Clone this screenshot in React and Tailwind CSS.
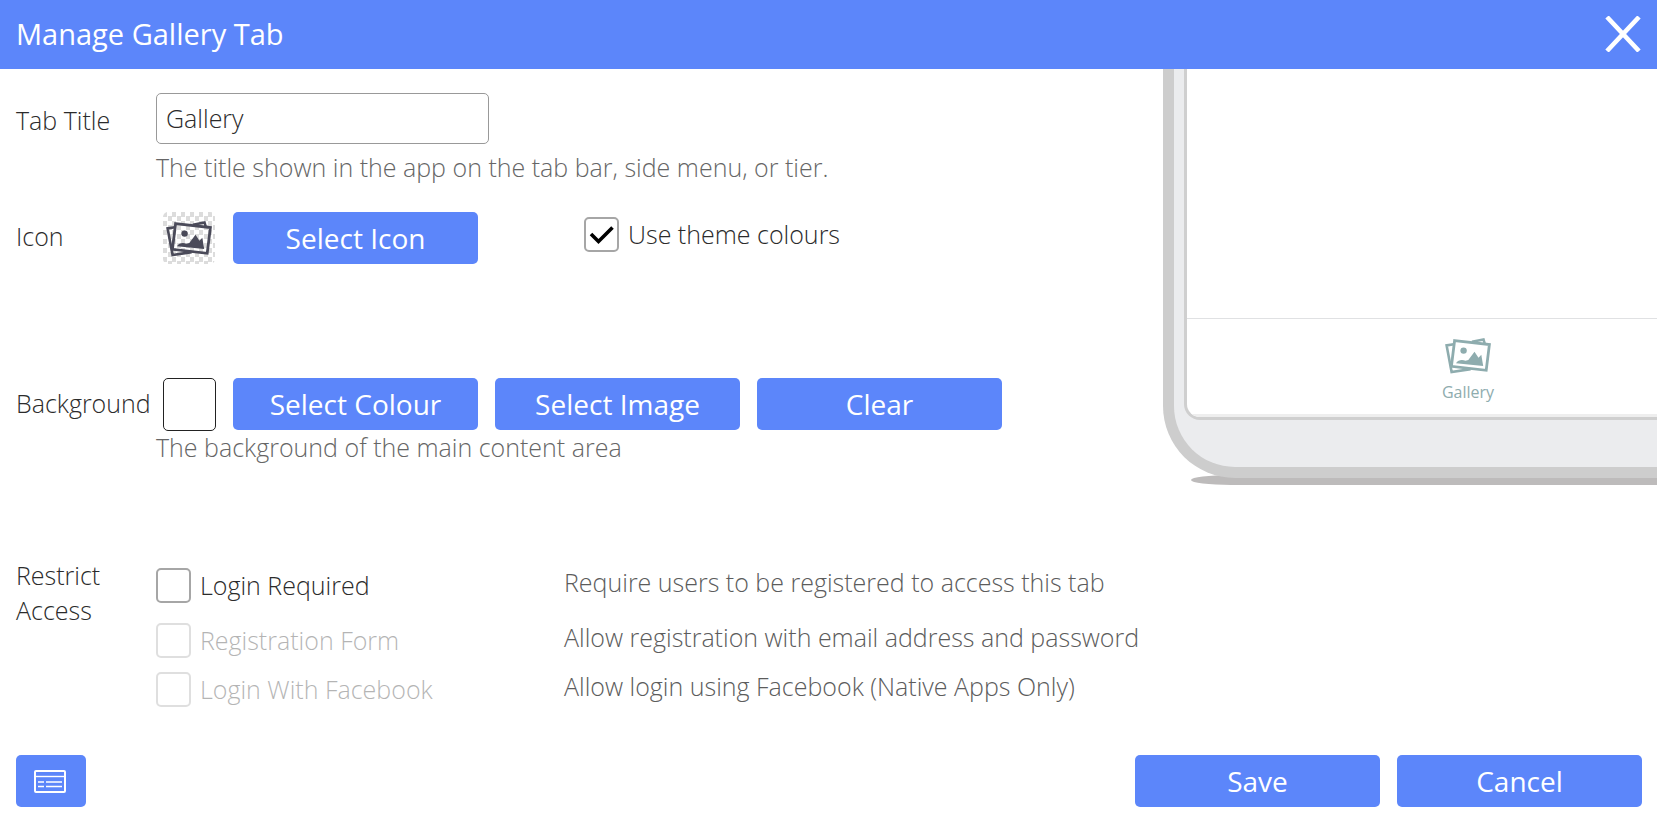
import React, { useState } from 'react';

const GalleryIcon = ({ className }) => (
  <svg viewBox="0 0 46 36" className={className} fill="none" aria-hidden="true">
    <path d="M8.8 6.2L1.6 7.4l5 26.7 19-3M27 3.7l11.5-2.2 1.2 4" stroke="currentColor" strokeWidth="2.6" />
    <path d="M9.6 2.6L44.4 6.6 41.2 32.3 6.4 28.3z" stroke="currentColor" strokeWidth="2.8" />
    <circle cx="18.6" cy="12.6" r="3.2" fill="currentColor" />
    <path d="M11 25.2c2-3.2 6-4 9.5-2.4l2.8-.8 6.2-8.2 4 6 2.8-3L38.200 28z" fill="currentColor" />
  </svg>
);

const Button = ({ children, ...props }) => (
  <button
    type="button"
    className="h-[52px] w-[245px] rounded-[5px] bg-[#5c86fa] text-[28px] leading-9 font-normal text-white hover:bg-[#4b76ec]"
    {...props}
  >
    {children}
  </button>
);

const Checkbox = ({ label, ...props }) => (
  <label className="flex items-center gap-[9px] text-[#2b2b2b] has-disabled:opacity-35">
    <span className="grid">
      <input
        type="checkbox"
        className="peer col-start-1 row-start-1 size-[35px] appearance-none rounded-[5px] border-2 border-[#a6a6a6] bg-white"
        {...props}
      />
      <svg
        viewBox="0 0 35 35"
        className="pointer-events-none invisible col-start-1 row-start-1 size-[35px] peer-checked:visible"
        fill="none"
        aria-hidden="true"
      >
        <path d="M7 17l7.500 7.500L28.500 10.500" stroke="#000" strokeWidth="3.6" />
      </svg>
    </span>
    {label}
  </label>
);

const PhonePreview = ({ title }) => (
  <aside className="w-[494px] shrink-0 overflow-hidden">
    <div className="relative w-[610px]">
      <div className="absolute bottom-[-7px] left-[28px] h-[10px] w-[700px] bg-[#bdbbbb] [border-radius:40px/5px]" />
      <div className="relative rounded-b-[72px] border-x-[11px] border-b-[11px] border-[#cdcdcd] bg-[#ebecee] px-[10px] pb-[47px]">
        <div className="overflow-hidden rounded-b-[16px] border-x-[3px] border-b-[3px] border-[#cfcfcf] bg-white">
          <div className="h-[249px]" />
          <div className="flex h-[99px] flex-col items-center border-t border-b-[3px] border-t-[#e0e1e3] border-b-[#eee] pt-[19px] text-[#8eacae]">
            <GalleryIcon className="h-9 w-[46px]" />
            <span className="mt-[6px] text-base leading-6">{title}</span>
          </div>
        </div>
      </div>
    </div>
  </aside>
);

const access = [
  { name: 'login', label: 'Login Required', help: 'Require users to be registered to access this tab' },
  { name: 'register', label: 'Registration Form', help: 'Allow registration with email address and password', disabled: true },
  { name: 'facebook', label: 'Login With Facebook', help: 'Allow login using Facebook (Native Apps Only)', disabled: true },
];

const App = () => {
  const [title, setTitle] = useState('Gallery');
  const [useTheme, setUseTheme] = useState(true);

  return (
    <div className="flex min-h-screen flex-col overflow-hidden bg-white font-['Open_Sans','Noto_Sans',sans-serif] text-[25px] leading-[35px]">
      <header className="flex h-[69px] items-center justify-between bg-[#5c86fa] px-4 pb-[2px] text-white">
        <h1 className="text-[29px]">Manage Gallery Tab</h1>
        <button type="button" aria-label="Close">
          <svg viewBox="0 0 36 36" className="size-9" fill="none" aria-hidden="true">
            <path d="M2 1l32 34M34 1L2 35" stroke="currentColor" strokeWidth="4.6" />
          </svg>
        </button>
      </header>

      <main className="flex">
        <form className="min-w-0 flex-1 pt-6 pl-4 font-light text-[#2b2b2b]">
          <div className="flex">
            <label htmlFor="tab-title" className="w-[140px] shrink-0 pt-[10px]">Tab Title</label>
            <div>
              <input
                id="tab-title"
                type="text"
                className="block h-[51px] w-[333px] rounded-[5px] border border-[#999] px-[9px] pb-[2px]"
                value={title}
                onChange={(e) => setTitle(e.target.value)}
              />
              <p className="mt-[6px] text-[#666]">The title shown in the app on the tab bar, side menu, or tier.</p>
            </div>
          </div>

          <div className="mt-[27px] flex items-center">
            <span className="w-[147px] shrink-0 pb-[3px]">Icon</span>
            <span className="mr-[18px] grid size-[52px] shrink-0 place-items-center rounded-[5px] bg-[conic-gradient(#fff_25%,#dcdcdc_0_50%,#fff_0_75%,#dcdcdc_0)] bg-size-[9px_9px] pt-px text-[#4a4a59]">
              <GalleryIcon className="h-9 w-[46px]" />
            </span>
            <Button>Select Icon</Button>
            <div className="ml-[106px] pb-2">
              <Checkbox label="Use theme colours" checked={useTheme} onChange={(e) => setUseTheme(e.target.checked)} />
            </div>
          </div>

          <div className="mt-[114px] flex items-start">
            <span className="w-[147px] shrink-0 pt-2">Background</span>
            <button type="button" aria-label="Background colour" className="mr-[17px] size-[53px] shrink-0 rounded-[5px] border border-[#222] bg-white" />
            <div className="flex gap-[17px]">
              <Button>Select Colour</Button>
              <Button>Select Image</Button>
              <Button>Clear</Button>
            </div>
          </div>
          <p className="-mt-px ml-[140px] text-[#666]">The background of the main content area</p>

          <fieldset className="mt-[93px] flex">
            <legend className="float-left w-[140px] pr-8">Restrict Access</legend>
            <div className="flex flex-1 flex-col gap-[14px] pt-[10px]">
              {access.map(({ help, ...item }) => (
                <div key={item.name} className="flex items-center first:mb-[6px]">
                  <div className="w-[408px] shrink-0">
                    <Checkbox {...item} />
                  </div>
                  <p className="-mt-[6px] whitespace-nowrap text-[#5c5c5c]">{help}</p>
                </div>
              ))}
            </div>
          </fieldset>
        </form>

        <PhonePreview title={title} />
      </main>

      <footer className="mt-auto flex items-center gap-[17px] pr-[15px] pb-[15px] pl-4">
        <button type="button" aria-label="Show list" className="mr-auto grid h-[52px] w-[70px] place-items-center rounded-[5px] bg-[#5c86fa] pr-[2px] text-white">
          <svg viewBox="0 0 32 23" className="h-[23px] w-8" fill="none" stroke="currentColor" aria-hidden="true">
            <rect x="1" y="1" width="30" height="21" rx="1" strokeWidth="2" />
            <path d="M1 6.5h30" strokeWidth="1.4" />
            <path d="M4 12h6M12 12h16M4 16.5h6M12 16.5h16" strokeWidth="1.6" />
          </svg>
        </button>
        <Button>Save</Button>
        <Button>Cancel</Button>
      </footer>
    </div>
  );
};

export default App;
